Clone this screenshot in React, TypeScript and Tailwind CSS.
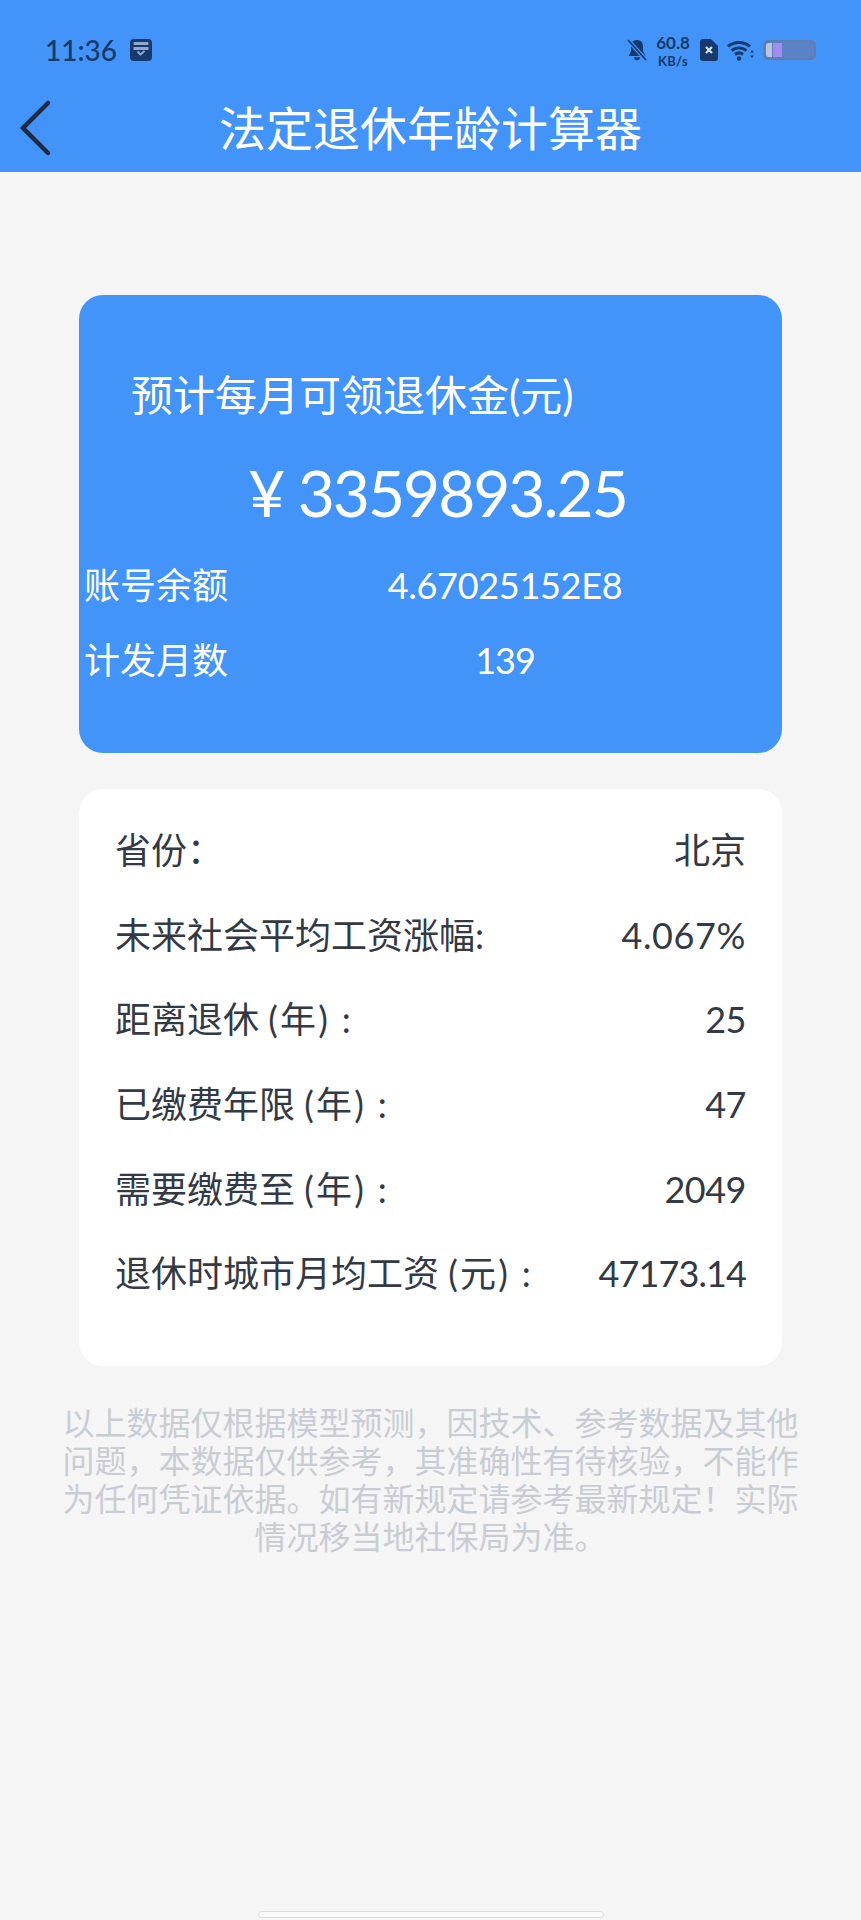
const FONT = "font-['Lato','Noto_Sans_CJK_SC',sans-serif]";

const detailRows = [
  { label: "省份：", value: "北京", valueClass: "" },
  { label: "未来社会平均工资涨幅:", value: "4.067%", valueClass: "tracking-[0.6px]" },
  { label: "距离退休 (\u200a年\u200a)\u2009 :", value: "25", valueClass: "tracking-[-0.5px]" },
  { label: "已缴费年限 (\u200a年\u200a)\u2009 :", value: "47", valueClass: "tracking-[-0.5px]" },
  { label: "需要缴费至 (\u200a年\u200a)\u2009 :", value: "2049", valueClass: "tracking-[-0.5px]" },
  { label: "退休时城市月均工资 (\u200a元\u200a)\u2009 :", value: "47173.14", valueClass: "tracking-[-0.9px]" },
];

const StatusBar = () => (
  <div className="flex h-[100px] items-center pl-[45px] pr-[45px] text-[#17396c]">
    <span className="text-[28px] font-medium leading-none">11:36</span>
    <svg className="ml-[13px]" width="22" height="22" viewBox="0 0 22 22">
      <rect width="22" height="22" rx="4" fill="#17396c" />
      <rect x="3.5" y="3" width="15" height="3" rx="1" fill="#8fa8cf" />
      <rect x="3.5" y="8" width="15" height="3" fill="#8fa8cf" />
      <path d="M7.5 12.5l3 3 4-3.5" fill="none" stroke="#8fa8cf" strokeWidth="2" />
    </svg>
    <div className="ml-auto flex items-center">
      <svg width="20" height="22" viewBox="0 0 20 22">
        <path d="M10 1c-4 0-6 2.800-6 6.500v5L1.500 17h17L16 12.500v-5C16 3.800 14 1 10 1z" fill="#17396c" />
        <path d="M7 18.200h6a3 3 0 0 1-6 0z" fill="#17396c" />
        <path d="M1 1l18 20" stroke="#4294f8" strokeWidth="4" />
        <path d="M1 1l18 20" stroke="#17396c" strokeWidth="1.800" />
      </svg>
      <div className="ml-[8px] flex w-[36px] flex-col items-center font-bold">
        <span className="text-[17px] leading-[21px]">60.8</span>
        <span className="text-[13px] leading-[16px] tracking-[0.3px]">KB/s</span>
      </div>
      <svg className="ml-[9px]" width="18" height="22" viewBox="0 0 18 22">
        <path d="M3 0h8l7 7v12a3 3 0 0 1-3 3H3a3 3 0 0 1-3-3V3a3 3 0 0 1 3-3z" fill="#17396c" />
        <path d="M6 8l6 6M12 8l-6 6" stroke="#d5e3f7" strokeWidth="2.200" />
      </svg>
      <svg className="ml-[9px]" width="27" height="21" viewBox="0 0 27 21">
        <path d="M1 6.500C7 1 17 1 23 6.500" fill="none" stroke="#17396c" strokeWidth="3" />
        <path d="M4.500 10.500c4.500-3.500 10.500-3.500 15 0" fill="none" stroke="#17396c" strokeWidth="3" />
        <path d="M8 14.500c2.500-2 5.500-2 8 0" fill="none" stroke="#17396c" strokeWidth="3" />
        <circle cx="12" cy="18.500" r="2.200" fill="#17396c" />
        <path d="M25 10l-2 2.500h4zM25 18l-2-2.500h4z" fill="#17396c" />
      </svg>
      <div className="ml-[9px] flex h-[20px] w-[53px] items-center overflow-hidden rounded-[5px] border-2 border-[#5f7eb0] bg-[#5b82c4] p-[1px]">
        <div className="h-full w-[6px] rounded-l-[3px] bg-[#b9c3e2]" />
        <div className="ml-[1px] h-full w-[9px] bg-[#a18df0]" />
      </div>
    </div>
  </div>
);

const NavBar = () => (
  <div className="relative flex h-[72px] items-center justify-center">
    <svg className="absolute left-[18px] top-[-1px]" width="36" height="60" viewBox="0 0 36 60">
      <path d="M30 4L5 29l25 25" fill="none" stroke="#1c2b40" strokeWidth="4.500" strokeLinecap="round" />
    </svg>
    <h1 className="mb-[16px] text-[47px] leading-none text-white">法定退休年龄计算器</h1>
  </div>
);

const SummaryCard = () => (
  <section className="h-[458px] rounded-[24px] bg-[#4294f8] text-white">
    <p className="pl-[52px] pt-[74px] text-[42px] leading-[52px]">预计每月可领退休金(元)</p>
    <p className="mt-[37px] pl-[14px] text-center text-[64px] leading-[70px] tracking-[-2px]">¥ 3359893.25</p>
    <div className="mt-[33px] flex h-[48px] items-center pl-[5px] text-[36px]">
      <span>账号余额</span>
      <span className="flex-1 text-center tracking-[-0.3px]">4.67025152E8</span>
    </div>
    <div className="mt-[27px] flex h-[48px] items-center pl-[5px] text-[36px]">
      <span>计发月数</span>
      <span className="flex-1 text-center tracking-[-1px]">139</span>
    </div>
  </section>
);

const DetailCard = () => (
  <section className="mt-[36px] h-[577px] rounded-[24px] bg-white px-[36px] pt-[19px] text-[36px] text-[#333a45]">
    {detailRows.map((row) => (
      <div key={row.label} className="flex h-[84.600px] items-center justify-between">
        <span>{row.label}</span>
        <span className={row.valueClass}>{row.value}</span>
      </div>
    ))}
  </section>
);

export default function App() {
  return (
    <div className={`${FONT} relative flex h-[1920px] w-[861px] flex-col overflow-hidden bg-[#f5f5f5]`}>
      <header className="h-[172px] bg-[#4294f8]">
        <StatusBar />
        <NavBar />
      </header>
      <main className="flex-1 px-[79px] pt-[123px]">
        <SummaryCard />
        <DetailCard />
        <p className="-mx-[20px] mt-[38px] text-center text-[32px] leading-[38px] text-[#c9cdd3]">
          以上数据仅根据模型预测，因技术、参考数据及其他问题，本数据仅供参考，其准确性有待核验，不能作为任何凭证依据。如有新规定请参考最新规定！实际情况移当地社保局为准。
        </p>
      </main>
      <div className="absolute bottom-[2px] left-[258px] h-[7px] w-[346px] rounded-full border border-[#dcdcdc] bg-[#fafafa]" />
    </div>
  );
}
